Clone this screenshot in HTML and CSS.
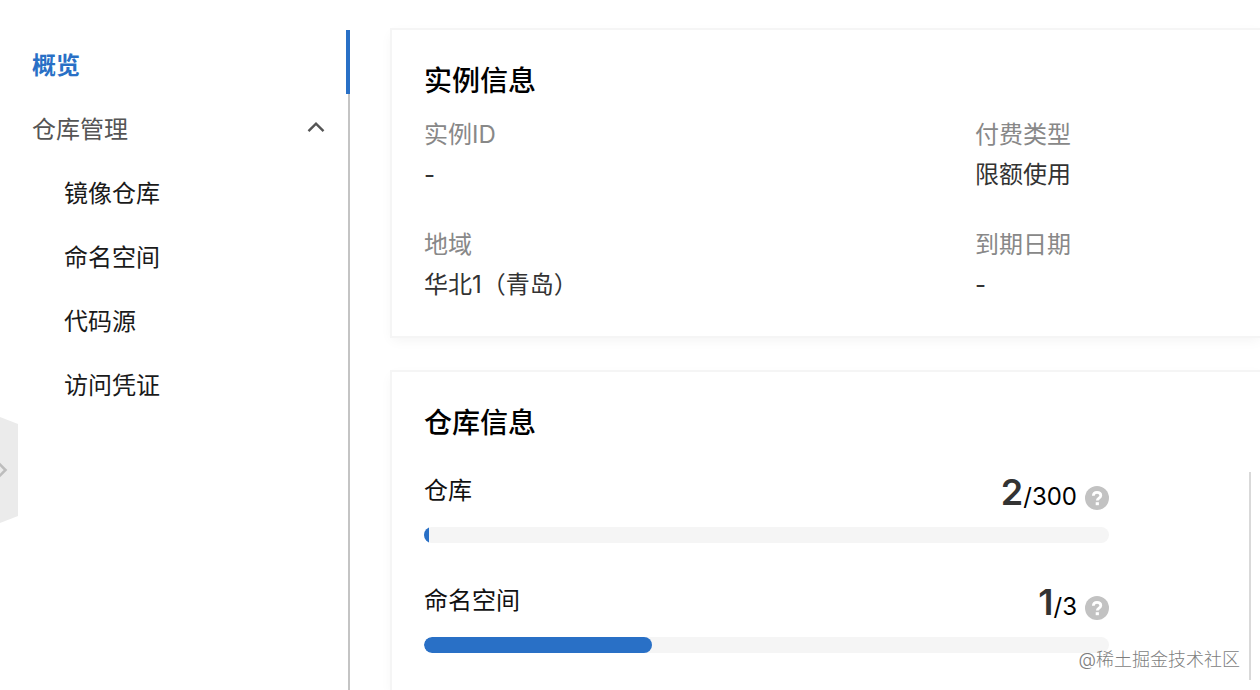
FILE: index.html
```html
<!DOCTYPE html>
<html lang="zh-CN">
<head>
<meta charset="utf-8">
<title>概览</title>
<meta name="viewport" content="width=device-width, initial-scale=1">
<link rel="stylesheet" href="styles.css">
</head>
<body>
<div class="page">
  <nav class="sidebar" aria-label="主导航">
    <a class="nav-item nav-active" href="#overview" aria-current="page">概览</a>
    <button class="nav-item nav-group" type="button" aria-expanded="true">
      <span>仓库管理</span>
      <svg class="nav-arrow" viewBox="0 0 18 12" aria-hidden="true"><path d="M1.5 10.2 9 2.6l7.500 7.600"/></svg>
    </button>
    <a class="nav-item nav-child" href="#images">镜像仓库</a>
    <a class="nav-item nav-child" href="#namespaces">命名空间</a>
    <a class="nav-item nav-child" href="#sources">代码源</a>
    <a class="nav-item nav-child" href="#credentials">访问凭证</a>
  </nav>

  <main class="content">
    <section class="card">
      <h2 class="card-title">实例信息</h2>
      <dl class="info">
        <div><dt>实例ID</dt><dd>-</dd></div>
        <div><dt>付费类型</dt><dd>限额使用</dd></div>
        <div><dt>地域</dt><dd>华北1（青岛）</dd></div>
        <div><dt>到期日期</dt><dd>-</dd></div>
      </dl>
    </section>

    <section class="card card-fill">
      <h2 class="card-title">仓库信息</h2>
      <div class="quotas">
        <div class="quota">
          <div class="quota-head">
            <span class="quota-name" id="q-repo">仓库</span>
            <span class="quota-count"><strong>2</strong>/300</span>
            <button class="help" type="button" aria-label="仓库说明">
              <svg viewBox="0 0 24 24" aria-hidden="true"><circle cx="12" cy="12" r="12"/><path d="M8.300 9.700C8.400 7.500 9.900 6.300 12 6.300c2.200 0 3.800 1.200 3.800 3.200 0 2.500-3.500 2.700-3.500 5"/><rect x="10.700" y="16.200" width="3.200" height="3"/></svg>
            </button>
          </div>
          <div class="track" role="progressbar" aria-labelledby="q-repo" aria-valuenow="2" aria-valuemin="0" aria-valuemax="300"><div class="bar" style="width:0.67%"></div></div>
        </div>
        <div class="quota">
          <div class="quota-head">
            <span class="quota-name" id="q-ns">命名空间</span>
            <span class="quota-count"><strong>1</strong>/3</span>
            <button class="help" type="button" aria-label="命名空间说明">
              <svg viewBox="0 0 24 24" aria-hidden="true"><circle cx="12" cy="12" r="12"/><path d="M8.300 9.700C8.400 7.500 9.900 6.300 12 6.300c2.200 0 3.800 1.200 3.800 3.200 0 2.500-3.500 2.700-3.500 5"/><rect x="10.700" y="16.200" width="3.200" height="3"/></svg>
            </button>
          </div>
          <div class="track" role="progressbar" aria-labelledby="q-ns" aria-valuenow="1" aria-valuemin="0" aria-valuemax="3"><div class="bar bar-round" style="width:33.33%"></div></div>
        </div>
      </div>
    </section>
  </main>

  <button class="drawer" type="button" aria-label="展开">
    <svg viewBox="0 0 18 106" aria-hidden="true"><path class="drawer-shape" d="M0 0 18 7v92L0 106z"/><path class="drawer-arrow" d="M-1 46.500 5.500 53-1 59.500"/></svg>
  </button>
  <span class="watermark">@稀土掘金技术社区</span>
</div>
</body>
</html>
```
FILE: styles.css
```css
*, *::before, *::after { box-sizing: border-box; }

body {
  margin: 0;
  background: #fff;
  color: #111;
  font-family: Inter, "Noto Sans CJK SC", sans-serif;
  font-size: 24px;
  line-height: 40px;
}

button {
  padding: 0;
  border: 0;
  background: none;
  color: inherit;
  font: inherit;
  text-align: left;
  cursor: pointer;
}

.page {
  position: relative;
  display: flex;
  min-height: 100vh;
  padding-top: 30px;
  overflow: hidden;
}

.sidebar {
  flex: 0 0 350px;
  display: flex;
  flex-direction: column;
  border-right: 2px solid #c4c4c4;
}

.nav-item {
  display: flex;
  align-items: center;
  justify-content: space-between;
  height: 64px;
  padding: 8px 23px 0 32px;
  color: #1a1a1a;
  text-decoration: none;
}

.nav-active {
  margin-right: -2px;
  border-right: 4px solid #2970c6;
  color: #2970c6;
  font-weight: 600;
}

.nav-group { color: #555; }
.nav-child { padding-left: 64px; }

.nav-arrow {
  width: 18px;
  height: 12px;
  margin-bottom: 6px;
  fill: none;
  stroke: #555;
  stroke-width: 2.4;
}

.content {
  flex: 1;
  min-width: 0;
  display: flex;
  flex-direction: column;
  gap: 36px;
  padding-left: 42px;
}

.card {
  padding: 33px 0 31px 32px;
  background: #fff;
  box-shadow: 0 0 0 2px #f5f5f5, 0 4px 12px rgba(0, 0, 0, 0.05);
}

.card-fill {
  flex: 1;
  display: flex;
  flex-direction: column;
  padding-bottom: 10px;
}

.card-title {
  margin: 0 0 16px;
  color: #000;
  font-size: 28px;
  font-weight: 500;
  line-height: 36px;
}

.info {
  display: grid;
  grid-template-columns: 65.9% 1fr;
  row-gap: 30px;
  margin: 0;
}

.info dt { color: #888; }
.info dd { margin: 0; color: #333; }

.quotas {
  flex: 1;
  display: flex;
  flex-direction: column;
  gap: 39px;
  margin: 15px 9px 0 0;
  padding-right: 140px;
  border-right: 2px solid #d9d9d9;
}

.quota {
  display: flex;
  flex-direction: column;
  gap: 15px;
}

.quota-head {
  display: flex;
  align-items: center;
  height: 40px;
}

.quota-name {
  flex: 1;
  padding-bottom: 2px;
}

.quota-count {
  padding-top: 4px;
  color: #000;
}

.quota-count strong {
  color: #333;
  font-size: 36px;
  font-weight: 600;
}

.help {
  width: 24px;
  height: 24px;
  margin: 12px 0 0 8px;
}

.help svg { display: block; }
.help circle { fill: #c2c2c2; }
.help rect { fill: #fff; }
.help path { fill: none; stroke: #fff; stroke-width: 2.8; }

.track {
  height: 16px;
  overflow: hidden;
  border-radius: 8px;
  background: #f5f5f5;
}

.bar {
  height: 100%;
  background: #2970c6;
}

.bar-round { border-radius: 8px; }

.drawer {
  position: absolute;
  top: 417px;
  left: 0;
  width: 18px;
  height: 106px;
}

.drawer svg { display: block; }
.drawer-shape { fill: #ebebeb; }
.drawer-arrow { fill: none; stroke: #bdbdbd; stroke-width: 2.6; }

.watermark {
  position: absolute;
  right: 20px;
  bottom: 18px;
  color: #7d7d7d;
  font-size: 18px;
  font-weight: 300;
  line-height: 24px;
  text-shadow: 1px 1px 1px #fff;
}
```
